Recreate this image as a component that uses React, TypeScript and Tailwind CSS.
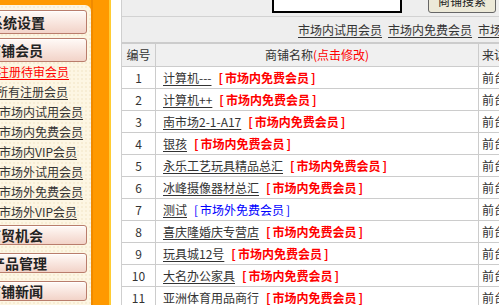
import React from 'react'

const FONT = "font-['Noto_Sans_CJK_SC','Noto_Sans',sans-serif]"

const topButtons = [
  { label: '系统设置', pl: 'pl-[8px]' },
  { label: '商铺会员', pl: 'pl-[6px]' },
]

const bottomButtons = [
  { label: '商贸机会', pl: 'pl-[6px]' },
  { label: '产品管理', pl: 'pl-[10px]' },
  { label: '商铺新闻', pl: 'pl-[6px]' },
]

const memberLinks = [
  { label: '注册待审会员', red: true, ml: '-ml-[3px]' },
  { label: '所有注册会员', red: false, ml: '-ml-[4px]' },
  { label: '市场内试用会员', red: false, ml: '-ml-[1px]' },
  { label: '市场内免费会员', red: false, ml: '-ml-[1px]' },
  { label: '市场内VIP会员', red: false, ml: '-ml-[1px]' },
  { label: '市场外试用会员', red: false, ml: '-ml-[1px]' },
  { label: '市场外免费会员', red: false, ml: '-ml-[1px]' },
  { label: '市场外VIP会员', red: false, ml: '-ml-[1px]' },
]

const shops = [
  { name: '计算机---', tag: '市场内免费会员', outside: false },
  { name: '计算机++', tag: '市场内免费会员', outside: false },
  { name: '南市场2-1-A17', tag: '市场内免费会员', outside: false },
  { name: '银孩', tag: '市场内免费会员', outside: false },
  { name: '永乐工艺玩具精品总汇', tag: '市场内免费会员', outside: false },
  { name: '冰峰摄像器材总汇', tag: '市场内免费会员', outside: false },
  { name: '测试', tag: '市场外免费会员', outside: true },
  { name: '喜庆隆婚庆专营店', tag: '市场内免费会员', outside: false },
  { name: '玩具城12号', tag: '市场内免费会员', outside: false },
  { name: '大名办公家具', tag: '市场内免费会员', outside: false },
  { name: '亚洲体育用品商行', tag: '市场内免费会员', outside: false },
]

function MenuButton({ label, pl, h }: { label: string; pl: string; h: string }) {
  return (
    <div
      className={`-ml-[20px] w-[107px] ${h} ${pl} flex items-center rounded-[3px] border border-[#b97d6c] bg-gradient-to-b from-[#fffaf7] to-[#f2d3c8] shadow-[inset_0_1px_0_#ffffff]`}
    >
      <span className="whitespace-nowrap text-[14px] font-bold leading-none text-[#222]">{label}</span>
    </div>
  )
}

function Sidebar() {
  return (
    <div className="flex h-full shrink-0 bg-[#ff9900]">
      <div className="mt-[5px] w-[91px] overflow-hidden rounded-tr-[6px] bg-[#fdf6e3] bg-[radial-gradient(#efe2c2_0.6px,transparent_0.8px)] bg-[length:4px_4px]">
        <div className="flex flex-col gap-[4px] pr-[4px] pt-[5px]">
          {topButtons.map((b) => (
            <MenuButton key={b.label} label={b.label} pl={b.pl} h="h-[24px]" />
          ))}
        </div>
        <ul className="flex flex-col">
          {memberLinks.map((l) => (
            <li key={l.label} className="h-[20px] whitespace-nowrap">
              <span
                className={`${l.ml} inline-block text-[12px] leading-[20px] underline underline-offset-2 ${
                  l.red ? 'text-[#ff0000]' : 'text-[#333]'
                }`}
              >
                {l.label}
              </span>
            </li>
          ))}
        </ul>
        <div className="flex flex-col gap-[8px] pr-[4px] pt-[3px]">
          {bottomButtons.map((b) => (
            <MenuButton key={b.label} label={b.label} pl={b.pl} h="h-[20px]" />
          ))}
        </div>
      </div>
      <div className="w-[2px] bg-[#f08a00]" />
      <div className="w-[16px] bg-[#ff9900]" />
      <div className="w-[2px] bg-[#ffcc33]" />
      <div className="w-[10px] bg-white" />
    </div>
  )
}

function Tag({ text, outside }: { text: string; outside: boolean }) {
  return (
    <span
      className={`ml-[7px] whitespace-nowrap ${
        outside ? 'font-normal text-[#0000ff]' : 'font-bold text-[#ff0000]'
      }`}
    >
      <span className="mr-[2px]">[</span>
      {text}
      <span className="ml-[2px]">]</span>
    </span>
  )
}

export default function App() {
  return (
    <div className={`flex h-[305px] w-[499px] overflow-hidden bg-white ${FONT} text-[12px] text-[#333]`}>
      <Sidebar />

      <div className="flex-1 overflow-hidden border-l border-[#cfcfcf]">
        <div className="w-[620px]">
          {/* search bar, scrolled partly out of view */}
          <div className="h-[17px] overflow-hidden border-b border-[#d2d2d2] bg-[#eeeeee]">
            <div className="-mt-[11px] flex items-center pl-[150px]">
              <input
                type="text"
                readOnly
                className="block h-[24px] w-[130px] shrink-0 border-2 border-solid border-black bg-white outline-none"
              />
              <button
                type="button"
                className="ml-[26px] flex h-[24px] w-[68px] shrink-0 items-center justify-center rounded-[3px] border border-[#666] bg-[#ece9d8] text-[12px] text-[#222]"
              >
                商铺搜索
              </button>
            </div>
          </div>

          {/* member filters */}
          <div className="flex h-[26px] items-center gap-[6px] whitespace-nowrap border-b border-[#cccccc] bg-[#eeeeee] pl-[176px]">
            <span className="underline underline-offset-2">市场内试用会员</span>
            <span className="underline underline-offset-2">市场内免费会员</span>
            <span className="underline underline-offset-2">市场内VIP会员</span>
          </div>

          {/* shop table */}
          <div className="border-t border-[#cccccc]">
            <div className="flex h-[23px] border-b border-[#cccccc] bg-[#f0f0f0]">
              <div className="flex w-[34px] shrink-0 items-center justify-center border-r border-[#cccccc]">编号</div>
              <div className="flex w-[323px] shrink-0 items-center justify-center border-r border-[#cccccc]">
                商铺名称<span className="text-[#ff0000]">(点击修改)</span>
              </div>
              <div className="flex items-center pl-[3px]">来访方式</div>
            </div>
            {shops.map((s, i) => (
              <div key={i} className="flex h-[22px] border-b border-[#cccccc] bg-white">
                <div className="flex w-[34px] shrink-0 items-center justify-center border-r border-[#cccccc]">{i + 1}</div>
                <div className="flex w-[323px] shrink-0 items-center border-r border-[#cccccc] pl-[7px] whitespace-nowrap">
                  <span className="underline underline-offset-2">{s.name}</span>
                  <Tag text={s.tag} outside={s.outside} />
                </div>
                <div className="flex items-center pl-[3px] whitespace-nowrap">前台注册</div>
              </div>
            ))}
          </div>
        </div>
      </div>
    </div>
  )
}
